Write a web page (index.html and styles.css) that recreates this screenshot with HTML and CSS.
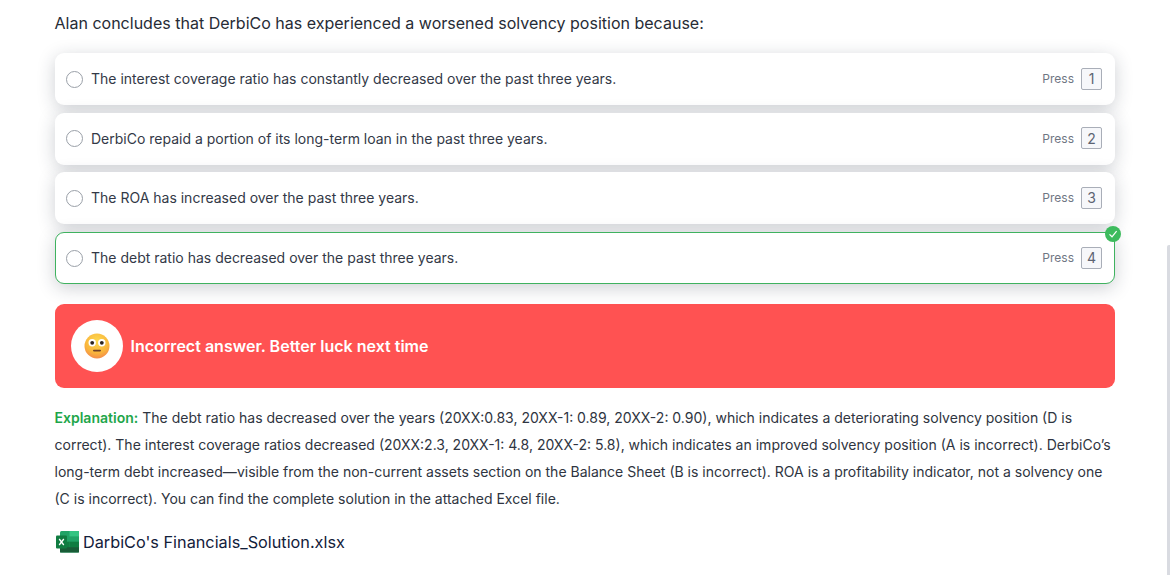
FILE: index.html
```html
<!DOCTYPE html>
<html lang="en">
<head>
    <meta charset="UTF-8">
    <meta name="viewport" content="width=device-width, initial-scale=1.0">
    <title>Question</title>
    <link rel="stylesheet" href="styles.css">
</head>
<body>
    <div class="scroll-thumb"></div>
    <div class="container">
        <p class="question">Alan concludes that DerbiCo has experienced a worsened solvency position because:</p>

        <div class="options">
            <div class="option">
                <span class="radio"></span>
                <span class="option-text">The interest coverage ratio has constantly decreased over the past three years.</span>
                <span class="press">Press</span>
                <span class="key">1</span>
            </div>
            <div class="option">
                <span class="radio"></span>
                <span class="option-text">DerbiCo repaid a portion of its long-term loan in the past three years.</span>
                <span class="press">Press</span>
                <span class="key">2</span>
            </div>
            <div class="option">
                <span class="radio"></span>
                <span class="option-text">The ROA has increased over the past three years.</span>
                <span class="press">Press</span>
                <span class="key">3</span>
            </div>
            <div class="option correct">
                <span class="radio"></span>
                <span class="option-text">The debt ratio has decreased over the past three years.</span>
                <span class="press">Press</span>
                <span class="key">4</span>
                <span class="check">
                    <svg width="10" height="10" viewBox="0 0 10 10"><path d="M1.5 5.4 4 7.8 8.6 2.2" fill="none" stroke="#fff" stroke-width="1.2"/></svg>
                </span>
            </div>
        </div>

        <div class="result">
            <span class="result-icon">
                <svg width="26" height="26" viewBox="0 0 26 26">
                    <defs>
                        <radialGradient id="face" cx="0.5" cy="0.3" r="0.8">
                            <stop offset="0" stop-color="#fdd94f"/>
                            <stop offset="0.6" stop-color="#f9b53c"/>
                            <stop offset="1" stop-color="#f27a50"/>
                        </radialGradient>
                    </defs>
                    <circle cx="13" cy="13" r="12.5" fill="url(#face)"/>
                    <circle cx="8.2" cy="9.8" r="3.7" fill="#fff"/>
                    <circle cx="17.8" cy="9.8" r="3.7" fill="#fff"/>
                    <circle cx="8.2" cy="9.8" r="1.9" fill="#2c2320"/>
                    <circle cx="17.8" cy="9.8" r="1.9" fill="#2c2320"/>
                    <rect x="9" y="16.8" width="8" height="1.6" rx="0.8" fill="#6e3f28"/>
                </svg>
            </span>
            <span class="result-text">Incorrect answer. Better luck next time</span>
        </div>

        <p class="explanation"><strong>Explanation:</strong> The debt ratio has decreased over the years (20XX:0.83, 20XX-1: 0.89, 20XX-2: 0.90), which indicates a deteriorating solvency position (D is correct). The interest coverage ratios decreased (20XX:2.3, 20XX-1: 4.8, 20XX-2: 5.8), which indicates an improved solvency position (A is incorrect). DerbiCo’s long-term debt increased—visible from the non-current assets section on the Balance Sheet (B is incorrect). ROA is a profitability indicator, not a solvency one (C is incorrect). You can find the complete solution in the attached Excel file.</p>

        <div class="attachment">
            <svg width="24" height="22" viewBox="0 0 24 22">
                <rect x="5" y="0" width="19" height="21.5" rx="1.5" fill="#21a366"/>
                <rect x="14.5" y="0" width="9.5" height="5.4" fill="#33c481"/>
                <rect x="14.5" y="10.7" width="9.5" height="5.4" fill="#107c41"/>
                <rect x="5" y="10.7" width="9.5" height="5.4" fill="#107c41"/>
                <rect x="5" y="16.1" width="19" height="5.4" fill="#185c37"/>
                <rect x="1" y="4.5" width="11" height="13" rx="1" fill="#107c41"/>
                <path d="M4.2 8 8.8 14M8.8 8 4.2 14" stroke="#fff" stroke-width="1.3" fill="none"/>
            </svg>
            <span>DarbiCo's Financials_Solution.xlsx</span>
        </div>
    </div>
</body>
</html>
```

FILE: styles.css
```css
body {
    font-family: Inter, "Noto Sans", sans-serif;
    margin: 0;
    background-color: #fff;
    color: #2b3140;
    overflow: hidden;
}
.container {
    width: 1060.5px;
    margin-left: 54.5px;
    padding-top: 13px;
}
.question {
    margin: 0 0 19.3px;
    font-size: 16.03px;
    line-height: 21px;
    color: #272c36;
}
.options {
    display: flex;
    flex-direction: column;
    gap: 7.6px;
}
.option {
    position: relative;
    display: flex;
    align-items: center;
    height: 52px;
    box-sizing: border-box;
    padding: 0 13px 0 11.5px;
    background-color: #fff;
    border-radius: 9px;
    box-shadow: 0 4px 18px rgba(30,40,60,0.22);
    font-size: 14px;
    color: #333947;
}
.correct {
    border: 1px solid #3fb25f;
    padding: 0 12px 0 10.5px;
}
.radio {
    width: 15px;
    height: 15px;
    border: 1px solid #9aa0a8;
    border-radius: 50%;
    margin-right: 8px;
}
.option-text {
    flex: 1;
    margin-bottom: 1px;
}
.press {
    font-size: 12px;
    color: #6f7683;
    margin-right: 7px;
    margin-bottom: 1px;
}
.key {
    width: 19px;
    height: 20px;
    display: flex;
    align-items: center;
    justify-content: center;
    border: 1px solid #a9aeb8;
    border-radius: 2px;
    background-color: #f6f7fa;
    color: #5d6472;
    font-size: 14px;
    margin-bottom: 1px;
}
.check {
    position: absolute;
    top: -7px;
    right: -7px;
    width: 16px;
    height: 16px;
    border-radius: 50%;
    background-color: #3dbb5d;
    display: flex;
    align-items: center;
    justify-content: center;
}
.result {
    display: flex;
    align-items: center;
    gap: 8px;
    height: 84px;
    margin-top: 20px;
    padding-left: 16px;
    background-color: #ff5252;
    border-radius: 9px;
}
.result-icon {
    width: 52px;
    height: 52px;
    border-radius: 50%;
    background-color: #fff;
    display: flex;
    align-items: center;
    justify-content: center;
}
.result-text {
    color: #fff;
    font-size: 16.05px;
    font-weight: 600;
}
.explanation {
    margin: 16px 0 0;
    font-size: 14.02px;
    line-height: 27px;
    color: #2f3541;
}
.explanation strong {
    color: #1ea64a;
    font-weight: 600;
}
.attachment {
    display: flex;
    align-items: center;
    gap: 4.5px;
    margin-top: 19px;
    font-size: 16.25px;
    color: #12203a;
}
.scroll-thumb {
    position: absolute;
    top: 245px;
    right: 0;
    bottom: 0;
    width: 3.5px;
    border-radius: 2px 0 0 0;
    background-color: #d9dbe1;
}
```
